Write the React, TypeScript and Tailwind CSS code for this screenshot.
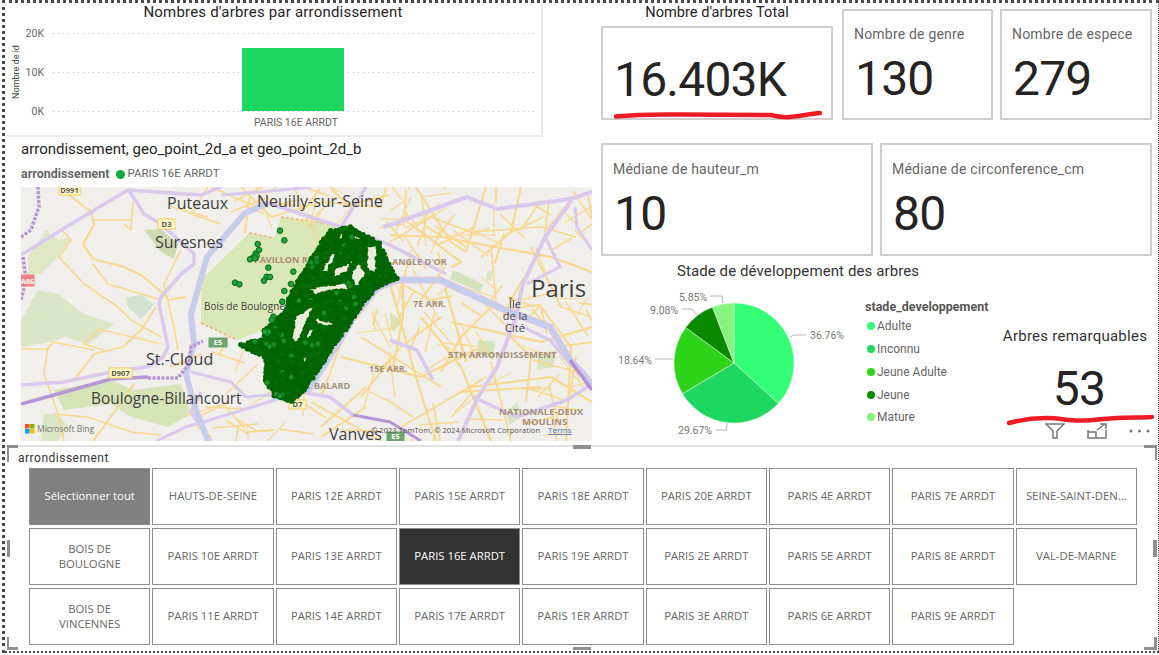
import React from 'react';

const din = "font-['Roboto',sans-serif]";
const segoe = "font-['Open_Sans',sans-serif]";

// petit générateur pour semer les points de la carte
const rng = (seed: number) => () => {
  seed = (seed * 16807) % 2147483647;
  return seed / 2147483647;
};

const z7 = (pts: number[]) => {
  const out: [number, number][] = [];
  for (let i = 0; i < pts.length; i += 2) out.push([209 + pts[i] / 3, 28 + pts[i + 1] / 3]);
  return out;
};
const poly = (p: [number, number][]) => p.map((c) => `${c[0].toFixed(1)},${c[1].toFixed(1)}`).join(' ');

const blob = z7([305, 50, 358, 36, 445, 85, 498, 192, 438, 215, 396, 268, 326, 368, 228, 516, 185, 558, 135, 540, 106, 496, 110, 430, 32, 390, 105, 372, 104, 345, 165, 290, 185, 232, 235, 152, 282, 75]);

// les trous sont élargis : les points du bord les referment ensuite
const grow = (h: [number, number][]) => {
  const cx = h.reduce((s, p) => s + p[0], 0) / h.length;
  const cy = h.reduce((s, p) => s + p[1], 0) / h.length;
  return h.map((p): [number, number] => [cx + (p[0] - cx) * 1.45, cy + (p[1] - cy) * 1.45]);
};

const holes = [
  [325, 55, 350, 50, 330, 80],
  [368, 55, 400, 72, 372, 78],
  [415, 105, 440, 100, 435, 170, 410, 150],
  [300, 120, 315, 125, 295, 165, 275, 165],
  [320, 160, 370, 135, 350, 170, 315, 185],
  [385, 150, 405, 175, 380, 210, 365, 180],
  [250, 220, 330, 205, 345, 225, 290, 230, 265, 240],
  [200, 310, 245, 285, 230, 320, 215, 360, 195, 375, 190, 350],
  [260, 310, 310, 320, 300, 335, 265, 330],
  [215, 430, 235, 420, 225, 450],
  [165, 440, 175, 445, 165, 470],
  [240, 340, 255, 350, 230, 375, 215, 385],
].map(z7).map(grow);

const inside = (x: number, y: number, p: [number, number][]) => {
  let c = false;
  for (let i = 0, j = p.length - 1; i < p.length; j = i++) {
    if (p[i][1] > y !== p[j][1] > y && x < ((p[j][0] - p[i][0]) * (y - p[i][1])) / (p[j][1] - p[i][1]) + p[i][0]) c = !c;
  }
  return c;
};

const blobDots: [number, number][] = (() => {
  const r = rng(4242);
  const out: [number, number][] = [];
  while (out.length < 150) {
    const x = 215 + r() * 165;
    const y = 35 + r() * 190;
    if (inside(x, y, blob) && !holes.some((h) => inside(x, y, h))) out.push([x, y]);
  }
  return out;
})();

// les bords du nuage sont faits de points, pas d'une ligne droite
const edgeDots: [number, number][] = (() => {
  const r = rng(99);
  const out: [number, number][] = [];
  [blob, ...holes].forEach((ring) => {
    ring.forEach((a, i) => {
      const b = ring[(i + 1) % ring.length];
      const n = Math.ceil(Math.hypot(b[0] - a[0], b[1] - a[1]) / 4);
      for (let k = 0; k < n; k++) {
        out.push([a[0] + ((b[0] - a[0]) * k) / n + (r() - 0.5) * 2, a[1] + ((b[1] - a[1]) * k) / n + (r() - 0.5) * 2]);
      }
    });
  });
  return out;
})();

const looseDots = z7([150, 47, 163, 76, 83, 87, 87, 105, 77, 115, 70, 127, 60, 133, 80, 122, 75, 130, 115, 158, 190, 170, 110, 185, 120, 186, 102, 197, 183, 207, 163, 228, 157, 260, 15, 203, 28, 208, 130, 305, 125, 315, 115, 350, 105, 350]);

const yellowRoads: [string, number][] = [
  ['M47 7 L70 25 L73 38 L62 57 L72 72 L103 80 L120 88 L143 107', 2.2],
  ['M72 33 L110 33 M110 43 L112 15 M103 37 L110 43', 1.6],
  ['M40 42 L50 53 L38 70 L63 97 L97 120 L110 133 L140 150', 1.6],
  ['M72 77 L87 97 L137 112', 1.6],
  ['M135 120 L120 143 L102 160 L73 167 L53 193', 1.8],
  ['M78 142 L62 157 L83 163 M78 142 L140 157', 1.6],
  ['M0 162 L27 162 L32 155 L73 163', 1.6],
  ['M27 160 L23 187 L37 227 L43 254', 1.7],
  ['M33 227 L67 230 L110 245 L140 248', 1.7],
  ['M113 197 L97 220 L72 254', 2],
  ['M160 63 L143 97 L153 140 L157 163', 1.6],
  ['M187 0 L170 27 L200 37 M150 20 L187 30', 1.4],
  ['M143 107 L147 113 L165 110', 1.8],
  ['M220 0 L250 30 L300 15 M235 20 L190 0', 1.6],
  ['M300 15 L360 20 L365 0', 1.6],
  ['M330 130 L300 210 M340 150 L420 200 M290 215 L360 254', 1.8],
  ['M345 200 L300 240 M320 170 L400 190 L460 160', 2],
  ['M370 100 L395 190 L415 254 M382 95 L382 130 L372 180', 2.2],
  ['M400 130 L440 180 L470 254 M424 100 L445 175', 2.2],
  ['M369 48 L420 50 L530 70 L571 85 M380 30 L440 75 L430 80', 2.2],
  ['M395 0 L430 55 L445 65 L465 0 M500 0 L490 45 L460 70', 2],
  ['M430 135 L520 155 L571 140 M450 200 L530 190 L571 215', 2.2],
  ['M520 120 L550 160 L545 254 M490 150 L510 170 L505 215', 2],
  ['M380 240 L440 205 L520 200 M470 175 L490 254', 1.8],
  ['M470 60 L475 115 L440 150 L420 185 M510 60 L540 120 L570 130', 1.8],
  ['M369 55 L410 30 L450 45 L520 40 L555 50', 1.6],
  ['M340 210 L380 160 L420 130 M300 250 L345 220', 1.8],
];

const scatter = (seed: number, n: number, x0: number, w: number, y0: number, h: number) => {
  const r = rng(seed);
  const out: [string, number][] = [];
  for (let i = 0; i < n; i++) {
    const x = x0 + r() * w;
    const y = y0 + r() * h;
    const a = r() * 6.28;
    const l = 16 + r() * 30;
    out.push([`M${x.toFixed(0)} ${y.toFixed(0)} L${(x + Math.cos(a) * l).toFixed(0)} ${(y + Math.sin(a) * l).toFixed(0)}`, 1 + r() * 0.9]);
  }
  return out;
};

const extraRoads = [
  ...scatter(777, 120, 345, 226, 0, 254),
  ...scatter(31, 26, 180, 110, 160, 94),
  ...scatter(57, 22, 225, 120, 0, 38),
];

const lavender: [string, number][] = [
  ['M0 68 L50 37 L107 3 L180 8 L200 0', 3.5],
  ['M107 2 L123 27 L140 37 L173 67 L173 77 L160 87 L140 110 L138 117 L147 160 L142 170 L127 180 L100 183 L43 195 L0 198', 3.5],
  ['M247 16 L320 40 L345 0', 3.5],
  ['M200 8 L240 5 L290 0', 3],
  ['M325 40 L369 58 L425 87', 3.5],
  ['M362 40 L369 38 L446 10 L476 22 L549 12 L571 5', 4],
  ['M551 13 L524 50 L502 97 L494 133 L476 180 L456 212 L437 254', 4],
  ['M524 50 L539 80 L506 97', 3],
  ['M554 20 L556 40 L571 63', 3],
  ['M369 153 L396 163 L412 193', 3.5],
  ['M452 210 L496 230 L546 213 L571 197', 3.5],
  ['M284 206 L309 210 L332 228', 3.5],
  ['M502 140 L529 153 L549 177', 3.5],
  ['M135 254 L165 240 L215 225 L270 208', 3],
  ['M170 185 L210 195 L225 210 L285 205', 3],
  ['M190 254 L170 225 L180 205', 3.5],
];

const parks: [string, string][] = [
  ['M0 133 L17 103 L37 107 L63 127 L93 137 L67 157 L43 150 L30 155 L0 160 Z', '#dbe6c6'],
  ['M7 70 L25 43 L37 53 L50 50 L37 70 L20 87 L7 88 Z', '#dfe7c5'],
  ['M123 43 L140 42 L157 57 L153 72 L140 65 Z', '#cfdcb2'],
  ['M105 110 L122 108 L133 118 L120 132 L107 120 Z', '#d3e2cf'],
  ['M33 203 L90 193 L113 203 L160 197 L170 227 L147 240 L110 230 L90 217 L43 223 Z', '#d6e4b8'],
  ['M23 227 L37 227 L47 240 L37 254 L20 254 Z', '#dbe6c6'],
  ['M260 30 L316 38 L300 63 L281 90 L266 116 L243 143 L216 153 L180 136 L180 93 L228 46 L253 51 Z', '#dae7b6'],
  ['M432 83 L462 97 L459 105 L429 92 Z', '#d2e3bb'],
  ['M457 153 L474 155 L472 170 L456 167 Z', '#d2e3bb'],
  ['M517 167 L536 163 L532 180 L516 183 Z', '#d8e6c0'],
  ['M466 84 L472 85 L470 94 L465 93 Z', '#d8e6c0'],
  ['M369 125 L382 135 L372 145 L369 142 Z', '#d8e6c0'],
  ['M485 225 L497 215 L500 230 L488 238 Z', '#d8e6c0'],
];

const MapLabel = ({ x, y, size, children, end }: { x: number; y: number; size: number; children: string; end?: boolean }) => (
  <text x={x} y={y} fontSize={size} fill="#3f3f3f" fontFamily="'Open Sans',sans-serif" textAnchor={end ? 'middle' : 'start'}>
    {children}
  </text>
);

const Area = ({ x, y, children, size = 9 }: { x: number; y: number; children: string; size?: number }) => (
  <text x={x} y={y} fontSize={size} fontWeight={700} fill="#a88e7c" fontFamily="'Open Sans',sans-serif">
    {children}
  </text>
);

const Shield = ({ x, y, w, h, label, kind = 'y' }: { x: number; y: number; w: number; h: number; label: string; kind?: 'y' | 'g' | 'r' }) => {
  const bg = kind === 'y' ? '#fff8c4' : kind === 'g' ? '#6da46f' : '#ef7f86';
  const bd = kind === 'y' ? '#f2cf5c' : kind === 'g' ? '#6da46f' : '#ef7f86';
  const fg = kind === 'y' ? '#555' : '#fff';
  return (
    <g>
      <rect x={x} y={y} width={w} height={h} fill={bg} stroke={bd} />
      <text x={x + w / 2} y={y + h - 2} fontSize="7.5" fontWeight={700} fill={fg} textAnchor="middle" fontFamily="'Open Sans',sans-serif">
        {label}
      </text>
    </g>
  );
};

const ParisMap = () => (
  <svg width="571" height="254" viewBox="0 0 571 254" className="block bg-[#f1efeb]">
    {parks.map(([d, c], i) => (
      <path key={i} d={d} fill={c} />
    ))}
    <path d="M260 30 L316 38 M228 46 L253 51 M180 136 L216 153" fill="none" stroke="#e8b878" strokeWidth="1.5" strokeDasharray="3 2" />
    {yellowRoads.concat(extraRoads).map(([d, w], i) => (
      <path key={i} d={d} fill="none" stroke="#f8d88c" strokeWidth={w} strokeLinejoin="round" />
    ))}
    {lavender.map(([d, w], i) => (
      <path key={i} d={d} fill="none" stroke="#dac9ec" strokeWidth={w} strokeLinejoin="round" />
    ))}
    {/* la Seine */}
    <path d="M247 16 L224 26 L186 70 L170 127 L173 157 L165 187 L173 217 L187 254" fill="none" stroke="#d5c7ea" strokeWidth="6" />
    <path d="M247 16 L224 26 L186 70 L170 127 L173 157 L165 187 L173 217 L187 254" fill="none" stroke="#b9d2ee" strokeWidth="2.5" />
    <path d="M286 205 L316 158 L332 131 L356 101 L376 93 L419 93 L482 122 L529 140 L549 173 L571 197" fill="none" stroke="#d5c7ea" strokeWidth="7" />
    <path d="M286 205 L316 158 L332 131 L356 101 L376 93 L419 93 L482 122 L529 140 L549 173 L571 197" fill="none" stroke="#b9d2ee" strokeWidth="2.5" />
    {/* axes sombres */}
    <path d="M0 217 L33 208 L90 192 L127 190" fill="none" stroke="#b597d6" strokeWidth="3.5" />
    <path d="M127 191 L157 191 L168 177 L170 160 L182 154" fill="none" stroke="#b597d6" strokeWidth="3.5" strokeDasharray="3 1.5" />
    <path d="M0 50 L10 43 L18 20 L17 0" fill="none" stroke="#b597d6" strokeWidth="3.5" strokeDasharray="3 1.5" />
    <path d="M2 70 L5 93 L0 113" fill="none" stroke="#b597d6" strokeWidth="3.5" strokeDasharray="3 1.5" />
    <path d="M332 228 L369 235 L400 254" fill="none" stroke="#b597d6" strokeWidth="3" />
    <path d="M549 173 L571 203" fill="none" stroke="#b58fd0" strokeWidth="3.5" />

    <MapLabel x={146} y={22} size={16}>Puteaux</MapLabel>
    <MapLabel x={236} y={20} size={16}>Neuilly-sur-Seine</MapLabel>
    <MapLabel x={134} y={61} size={16}>Suresnes</MapLabel>
    <MapLabel x={125} y={178} size={16}>St.-Cloud</MapLabel>
    <MapLabel x={70} y={217} size={15.4}>Boulogne-Billancourt</MapLabel>
    <MapLabel x={308} y={253} size={16}>Vanves</MapLabel>
    <MapLabel x={510} y={110} size={24}>Paris</MapLabel>
    <MapLabel x={494} y={121} size={11} end>Île</MapLabel>
    <MapLabel x={494} y={133} size={11} end>de la</MapLabel>
    <MapLabel x={494} y={145} size={11} end>Cité</MapLabel>
    <MapLabel x={183} y={123} size={10}>Bois de Boulogne</MapLabel>
    <Area x={233} y={76}>PAVILLON ROYAL</Area>
    <Area x={371} y={78}>ANGLE D'OR</Area>
    <Area x={392} y={120}>7E ARR.</Area>
    <Area x={427} y={171} size={9.5}>5TH ARRONDISSEMENT</Area>
    <Area x={348} y={185}>15E ARR.</Area>
    <Area x={293} y={202}>BALARD</Area>
    <Area x={478} y={228} size={9.5}>NATIONALE-DEUX</Area>
    <Area x={501} y={238} size={9.5}>MOULINS</Area>

    <Shield x={38} y={-1} w={21} h={9} label="D991" />
    <Shield x={137} y={32} w={17} h={10} label="D3" />
    <Shield x={88} y={181} w={23} h={10} label="D907" />
    <Shield x={268} y={213} w={17} h={9} label="D7" />
    <Shield x={188} y={151} w={18} h={9} label="E5" kind="g" />
    <Shield x={366} y={245} w={17} h={9} label="E5" kind="g" />
    <Shield x={0} y={88} w={13} h={11} label="A86" kind="r" />

    {/* nuage de points du 16e */}
    <polygon points={poly(blob)} fill="#006400" />
    {holes.map((h, i) => (
      <polygon key={i} points={poly(h)} fill="#ececdd" />
    ))}
    {edgeDots.map(([x, y], i) => (
      <circle key={i} cx={x} cy={y} r="2.6" fill="#006400" />
    ))}
    {blobDots.map(([x, y], i) => (
      <circle key={i} cx={x} cy={y} r="2.8" fill={i % 4 === 0 ? '#1a8f2c' : '#046c06'} stroke="#006400" strokeWidth="0.8" />
    ))}
    {looseDots.map(([x, y], i) => (
      <circle key={i} cx={x} cy={y} r="2.8" fill="#23a03f" stroke="#066f10" strokeWidth="1" />
    ))}

    <g>
      <rect x="4" y="237" width="4.5" height="4.5" fill="#f25022" />
      <rect x="9" y="237" width="4.5" height="4.5" fill="#7fba00" />
      <rect x="4" y="242" width="4.5" height="4.5" fill="#00a4ef" />
      <rect x="9" y="242" width="4.5" height="4.5" fill="#ffb900" />
      <text x="16" y="245" fontSize="8.5" fill="#777" fontFamily="'Open Sans',sans-serif">Microsoft Bing</text>
    </g>
    <text x="350" y="246" fontSize="7.6" fill="#555" fontFamily="'Open Sans',sans-serif">© 2023 TomTom, © 2024 Microsoft Corporation</text>
    <text x="527" y="246" fontSize="8" fill="#4a6fb0" textDecoration="underline" fontFamily="'Open Sans',sans-serif">Terms</text>
  </svg>
);

const BarChart = () => (
  <svg width="536" height="110" viewBox="0 0 536 110" className="block">
    <text x="0" y="0" transform="translate(14 51) rotate(-90)" fontSize="9" fill="#444" textAnchor="middle" fontFamily="Roboto,sans-serif">
      Nombre de id
    </text>
    {[
      { y: 12, t: '20K' },
      { y: 51, t: '10K' },
      { y: 90, t: '0K' },
    ].map((g) => (
      <g key={g.t}>
        <line x1="48" x2="531" y1={g.y + 0.5} y2={g.y + 0.5} stroke="#c8c8c8" strokeDasharray="1 4" />
        <text x="39" y={g.y + 4} fontSize="10.5" fill="#666" textAnchor="end" fontFamily="Roboto,sans-serif">
          {g.t}
        </text>
      </g>
    ))}
    <rect x="237" y="27" width="102" height="63" fill="#1ed760" />
    <text x="291" y="105" fontSize="10.5" fill="#666" textAnchor="middle" fontFamily="Roboto,sans-serif">
      PARIS 16E ARRDT
    </text>
  </svg>
);

const Card = ({ label, value, className }: { label?: string; value: string; className: string }) => (
  <div className={`border-2 border-[#cfcfcf] ${className}`}>
    {label && <div className="mt-[13px] ml-[10px] text-[14px] leading-[20px] text-[#666] tracking-[0.2px]">{label}</div>}
    <div className={`ml-[11px] text-[48px] leading-[52px] text-[#252423] tracking-[-0.8px] ${label ? 'mt-[9px]' : 'mt-[26px]'}`}>{value}</div>
  </div>
);

const slices = [
  { p: 36.76, c: '#33ff77' },
  { p: 29.67, c: '#1ed760' },
  { p: 18.64, c: '#2dd41a' },
  { p: 9.08, c: '#0a8a00' },
  { p: 5.85, c: '#86f57f' },
];

const PieChart = () => {
  const cx = 133;
  const cy = 78;
  const r = 60;
  let acc = 0;
  return (
    <svg width="262" height="160" viewBox="0 0 262 160" className="block shrink-0">
      {slices.map((s) => {
        const a0 = (acc / 100) * 2 * Math.PI;
        acc += s.p;
        const a1 = (acc / 100) * 2 * Math.PI;
        const large = s.p > 50 ? 1 : 0;
        const d = `M${cx} ${cy} L${cx + r * Math.sin(a0)} ${cy - r * Math.cos(a0)} A${r} ${r} 0 ${large} 1 ${cx + r * Math.sin(a1)} ${cy - r * Math.cos(a1)} Z`;
        return <path key={s.c} d={d} fill={s.c} stroke="#e9f7e9" strokeWidth="0.5" />;
      })}
      <g fill="none" stroke="#b5b5b5">
        <path d="M189 52 L193 50 L205 50" />
        <path d="M115 145 L125.500 145 L126 138" />
        <path d="M54 74 L72 74" />
        <path d="M80 24 L91 24 L96 30" />
        <path d="M109 11 L121 11 L122 18" />
      </g>
      <g fontSize="10.500" fill="#777" fontFamily="Roboto,sans-serif">
        <text x="209" y="54">36.76%</text>
        <text x="77" y="149">29.67%</text>
        <text x="17" y="79">18.64%</text>
        <text x="49" y="29">9.08%</text>
        <text x="78" y="16">5.85%</text>
      </g>
    </svg>
  );
};

const legend = [
  { t: 'Adulte', c: 'bg-[#33ff77]' },
  { t: 'Inconnu', c: 'bg-[#1ed760]' },
  { t: 'Jeune Adulte', c: 'bg-[#2dd41a]' },
  { t: 'Jeune', c: 'bg-[#0a8a00]' },
  { t: 'Mature', c: 'bg-[#86f57f]' },
];

const slicerItems = [
  'Sélectionner tout', 'BOIS DE\nBOULOGNE', 'BOIS DE\nVINCENNES',
  'HAUTS-DE-SEINE', 'PARIS 10E ARRDT', 'PARIS 11E ARRDT',
  'PARIS 12E ARRDT', 'PARIS 13E ARRDT', 'PARIS 14E ARRDT',
  'PARIS 15E ARRDT', 'PARIS 16E ARRDT', 'PARIS 17E ARRDT',
  'PARIS 18E ARRDT', 'PARIS 19E ARRDT', 'PARIS 1ER ARRDT',
  'PARIS 20E ARRDT', 'PARIS 2E ARRDT', 'PARIS 3E ARRDT',
  'PARIS 4E ARRDT', 'PARIS 5E ARRDT', 'PARIS 6E ARRDT',
  'PARIS 7E ARRDT', 'PARIS 8E ARRDT', 'PARIS 9E ARRDT',
  'SEINE-SAINT-DEN...', 'VAL-DE-MARNE',
];

const Handle = ({ className }: { className: string }) => <div className={`absolute bg-[#8f8f8f] ${className}`} />;

export default function App() {
  return (
    <div className={`relative h-[655px] w-[1159px] overflow-hidden bg-white ${din}`}>
      <div className="ml-[2px] h-[653px] w-[1157px] border-t-[3px] border-r border-b-[2px] border-l-[3px] border-dotted border-[#4a4a4a]">
        <div className="flex h-[442px]">
          {/* Colonne gauche */}
          <div className="w-[587px] shrink-0">
            <div className="h-[134px] w-[538px] border-r-2 border-b-2 border-[#ececec]">
              <div className="text-center text-[15px] leading-[18px] tracking-[0.2px] text-[#252423]">Nombres d'arbres par arrondissement</div>
              <BarChart />
            </div>
            <div className="ml-[16px] mt-[2px] text-[15px] leading-[20px] text-[#252423]">arrondissement, geo_point_2d_a et geo_point_2d_b</div>
            <div className="ml-[16px] mt-[6px] flex h-[18px] items-center text-[11.5px] text-[#666]">
              <span className="text-[12.5px] font-bold">arrondissement</span>
              <span className="ml-[7px] h-[9px] w-[9px] rounded-full bg-[#13aa3e]" />
              <span className="ml-[2px]">PARIS 16E ARRDT</span>
            </div>
            <div className="ml-[16px] mt-[4px]">
              <ParisMap />
            </div>
          </div>

          {/* Colonne droite */}
          <div className="ml-[9px] w-[551px]">
            <div className="flex">
              <div className="w-[232px]">
                <div className="h-[23px] text-center text-[14.6px] leading-[18px] text-[#252423]">Nombre d'arbres Total</div>
                <Card value="16.403K" className="h-[94px]" />
              </div>
              <Card label="Nombre de genre" value="130" className="ml-[9px] mt-[6px] h-[111px] w-[151px]" />
              <Card label="Nombre de espece" value="279" className="ml-[7px] mt-[6px] h-[111px] w-[152px]" />
            </div>
            <div className="mt-[23px] flex gap-[7px]">
              <Card label="Médiane de hauteur_m" value="10" className="h-[113px] w-[272px] pt-[1px]" />
              <Card label="Médiane de circonference_cm" value="80" className="h-[113px] w-[272px] pt-[1px]" />
            </div>
            <div className="flex">
              <div className="w-[394px]">
                <div className="pt-[6px] text-center text-[15px] leading-[18px] tracking-[0.1px] text-[#333]">Stade de développement des arbres</div>
                <div className="mt-[5px] flex">
                  <PieChart />
                  <div className="ml-[2px] pt-[14px]">
                    <div className="text-[12.5px] font-bold leading-[16px] text-[#555]">stade_developpement</div>
                    {legend.map((l) => (
                      <div key={l.t} className="flex h-[22.75px] items-center text-[12px] text-[#666]">
                        <span className={`ml-[2px] h-[8px] w-[8px] rounded-full ${l.c}`} />
                        <span className="ml-[2px]">{l.t}</span>
                      </div>
                    ))}
                  </div>
                </div>
              </div>
              <div className="ml-[5px] w-[152px] pt-[71px] text-center">
                <div className="pr-[2px] text-[15px] leading-[18px] tracking-[0.25px] text-[#333]">Arbres remarquables</div>
                <div className="mt-[18px] pl-[6px] text-[48px] leading-[52px] tracking-[-0.8px] text-[#252423]">53</div>
                <div className="mt-[8px] flex items-center justify-center gap-[22px] pl-[43px] text-[#777]">
                  <svg width="20" height="16" viewBox="0 0 20 16" fill="none" stroke="currentColor" strokeWidth="1.500" className="shrink-0">
                    <path d="M1 1 L19 1 L12 8 L12 15 L8 15 L8 8 Z" />
                  </svg>
                  <svg width="20" height="16" viewBox="0 0 20 16" fill="none" stroke="currentColor" strokeWidth="1.500" className="shrink-0">
                    <path d="M1 7 L1 15 L19 15 L19 7 M1 9 L9 9 L9 15 M10 7 L18 1 M13 1 L19 1 L19 6" />
                  </svg>
                  <svg width="21" height="4" viewBox="0 0 21 4" fill="currentColor" className="shrink-0">
                    <circle cx="2" cy="2" r="1.500" />
                    <circle cx="10.500" cy="2" r="1.500" />
                    <circle cx="19" cy="2" r="1.500" />
                  </svg>
                </div>
              </div>
            </div>
          </div>
        </div>

        {/* Segment arrondissement */}
        <div className={`h-[206px] border-t-2 border-[#e2e2e2] ${segoe}`}>
          <div className={`ml-[13px] h-[21px] pt-[3px] text-[12px] leading-[16px] tracking-[0.5px] text-[#333] ${din}`}>arrondissement</div>
          <div className="ml-[24px] grid h-[177px] w-[1108px] grid-flow-col grid-cols-9 grid-rows-3 gap-x-[2px] gap-y-[3px]">
            {slicerItems.map((t) => {
              let tone = 'bg-white text-[#666]';
              if (t === 'Sélectionner tout') tone = 'bg-[#808080] font-medium text-white';
              if (t === 'PARIS 16E ARRDT') tone = 'bg-[#333333] font-medium text-white';
              return (
                <div key={t} className={`flex items-center justify-center whitespace-pre-line border border-[#8c8c8c] px-[4px] pb-[2px] text-center text-[11.3px] leading-[15px] ${tone}`}>
                  {t}
                </div>
              );
            })}
          </div>
        </div>
      </div>

      {/* Poignées du visuel sélectionné */}
      <Handle className="left-[7px] top-[445px] h-[3px] w-[11px]" />
      <Handle className="left-[7px] top-[445px] h-[17px] w-[2px]" />
      <Handle className="left-[1144px] top-[445px] h-[3px] w-[13px]" />
      <Handle className="left-[1155px] top-[445px] h-[15px] w-[2px]" />
      <Handle className="left-[573px] top-[445px] h-[4px] w-[18px]" />
      <Handle className="left-[7px] top-[540px] h-[17px] w-[3px]" />
      <Handle className="left-[1153px] top-[540px] h-[17px] w-[4px]" />
      <Handle className="left-[7px] top-[647px] h-[3px] w-[11px]" />
      <Handle className="left-[7px] top-[637px] h-[13px] w-[2px]" />
      <Handle className="left-[573px] top-[647px] h-[3px] w-[18px]" />
      <Handle className="left-[1144px] top-[647px] h-[3px] w-[13px]" />
      <Handle className="left-[1154px] top-[637px] h-[13px] w-[3px]" />

      {/* Annotations au feutre rouge */}
      <svg width="1159" height="655" viewBox="0 0 1159 655" className="pointer-events-none absolute left-0 top-0" fill="none" stroke="#ed1c24" strokeWidth="4.500" strokeLinecap="round" strokeLinejoin="round">
        <path d="M616 116.500 C640 114 660 114.500 680 114.500 L771 115 C780 117 785 117.500 790 117 C800 116 810 114 820 113" />
        <path d="M1009 423 C1020 420 1035 418 1046 418 C1060 418 1070 421 1081 420.500 C1095 420 1105 418.500 1117 418 C1130 417.500 1140 417.500 1152 417" />
      </svg>
    </div>
  );
}
